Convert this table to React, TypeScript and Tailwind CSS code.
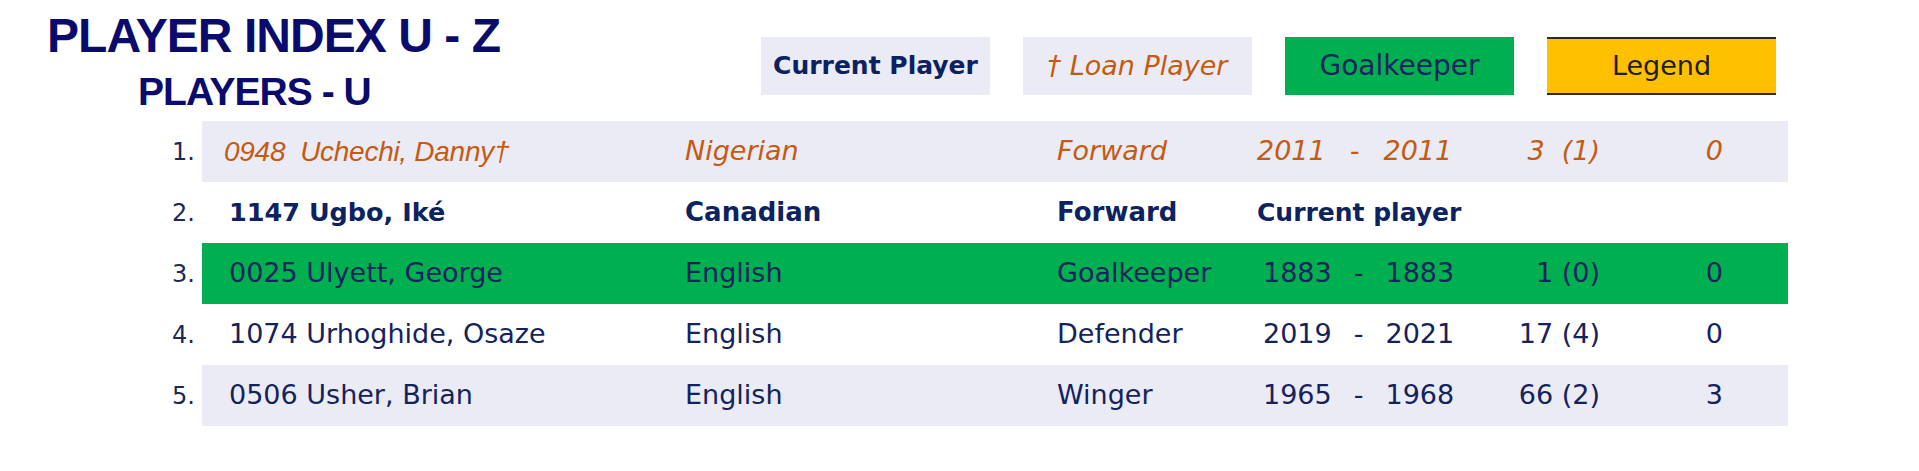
import React from "react"

type Row = {
  n: number
  id: string
  name: string
  nat: string
  pos: string
  from?: string
  to?: string
  apps?: string
  goals?: string
  kind: "loan" | "current" | "gk" | "white" | "shade"
}

const rows: Row[] = [
  { n: 1, id: "0948", name: "Uchechi, Danny†", nat: "Nigerian", pos: "Forward", from: "2011", to: "2011", apps: "3  (1)", goals: "0", kind: "loan" },
  { n: 2, id: "1147", name: "Ugbo, Iké", nat: "Canadian", pos: "Forward", kind: "current" },
  { n: 3, id: "0025", name: "Ulyett, George", nat: "English", pos: "Goalkeeper", from: "1883", to: "1883", apps: "1 (0)", goals: "0", kind: "gk" },
  { n: 4, id: "1074", name: "Urhoghide, Osaze", nat: "English", pos: "Defender", from: "2019", to: "2021", apps: "17 (4)", goals: "0", kind: "white" },
  { n: 5, id: "0506", name: "Usher, Brian", nat: "English", pos: "Winger", from: "1965", to: "1968", apps: "66 (2)", goals: "3", kind: "shade" },
]

const rowBg = {
  loan: "bg-[#ebebf5] italic text-[#c55a11]",
  current: "bg-white font-bold text-[#0d2261]",
  gk: "bg-[#00b050] text-[#14235c]",
  white: "bg-white text-[#14235c]",
  shade: "bg-[#ebebf5] text-[#14235c]",
}

const PlayerRow = ({ r }: { r: Row }) => {
  const loan = r.kind === "loan"
  const current = r.kind === "current"
  return (
    <div className="flex h-[61px] items-center">
      <div className="w-[202px] pr-[7px] text-right text-[24px] text-[#1d2a55]">{r.n}.</div>
      <div className={`flex h-full w-[1586px] items-center whitespace-pre text-[27px] ${rowBg[r.kind]}`}>
        <div
          className={
            loan
              ? "w-[483px] pl-[22px] font-['Liberation_Sans',Arial,sans-serif] text-[28px] tracking-[-0.01em]"
              : current
                ? "w-[483px] pl-[27px] text-[25.5px]"
                : "w-[483px] pl-[27px]"
          }
        >
          {r.id}
          {loan ? "  " : " "}
          {r.name}
        </div>
        <div className={current ? "w-[372px] text-[26px]" : "w-[372px]"}>{r.nat}</div>
        <div className={current ? "w-[200px] text-[26px]" : "w-[200px]"}>{r.pos}</div>
        {current ? (
          <div className="text-[25px]">Current player</div>
        ) : (
          <>
            <div className={loan ? "flex w-[237px]" : "flex w-[237px] pl-[6px]"}>
              <span>{r.from}</span>
              <span className={loan ? "mx-[24px]" : "mx-[22px]"}>-</span>
              <span>{r.to}</span>
            </div>
            <div className="w-[106px] text-right">{r.apps}</div>
            <div className="w-[123px] text-right">{r.goals}</div>
          </>
        )}
      </div>
    </div>
  )
}

export default function App() {
  return (
    <div className="h-[471px] w-[1919px] overflow-hidden bg-white font-['DejaVu_Sans',sans-serif]">
      <div className="flex h-[121px]">
        <div className="w-[761px] shrink-0 pl-[47px] pt-[12px] font-['Liberation_Sans',Arial,sans-serif] font-bold leading-none text-[#0b0b6e]">
          <h1 className="text-[48px] tracking-[-0.02em]">PLAYER INDEX U - Z</h1>
          <h2 className="ml-[91px] mt-[12px] text-[39px] tracking-tight">PLAYERS - U</h2>
        </div>
        <div className="flex gap-[33px] pt-[37px]">
          <div className="flex h-[58px] w-[229px] items-center justify-center bg-[#ebebf5] text-[25px] font-bold text-[#0b2161]">
            Current Player
          </div>
          <div className="flex h-[58px] w-[229px] items-center justify-center bg-[#ebebf5] text-[27px] italic text-[#c55a11]">
            † Loan Player
          </div>
          <div className="flex h-[58px] w-[229px] items-center justify-center bg-[#00b050] text-[28px] text-[#14235c]">
            Goalkeeper
          </div>
          <div className="flex h-[58px] w-[229px] items-center justify-center border-y-2 border-[#2a2a2a] bg-[#ffc000] text-[27px] text-[#1e1e1e]">
            Legend
          </div>
        </div>
      </div>
      {rows.map((r) => (
        <PlayerRow key={r.n} r={r} />
      ))}
    </div>
  )
}
